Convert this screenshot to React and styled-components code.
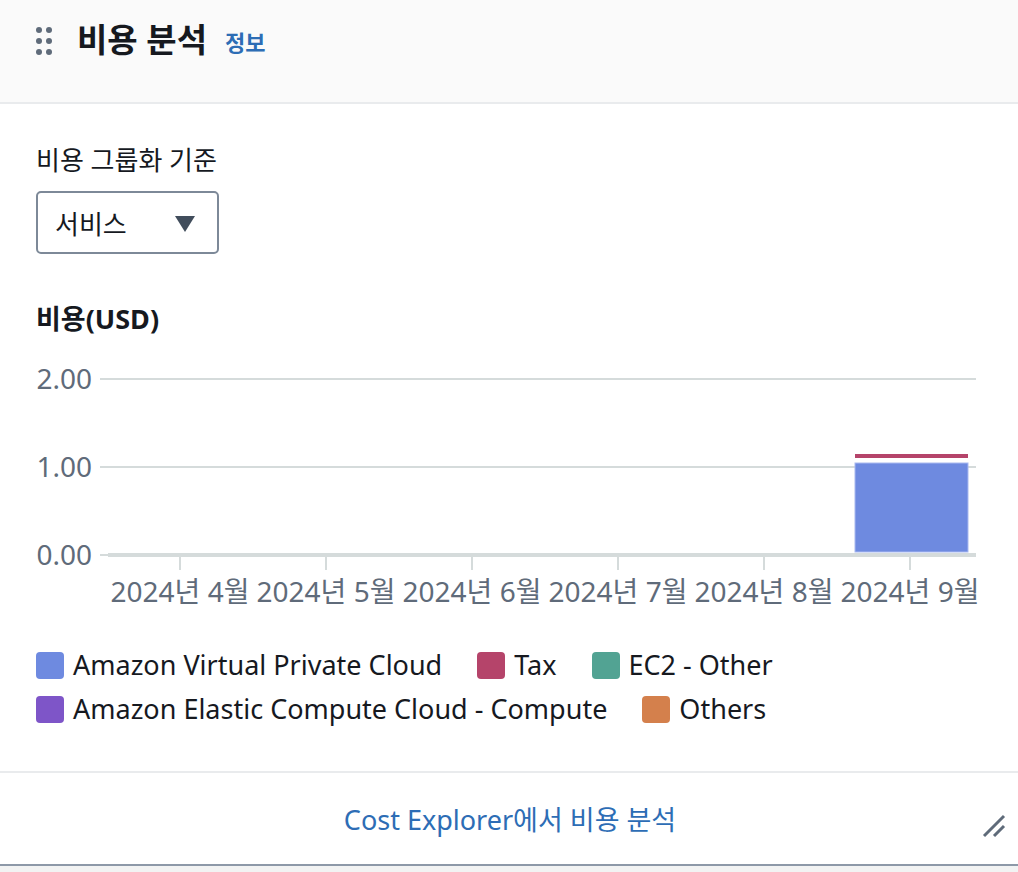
import React from 'react'
import styled, { createGlobalStyle } from 'styled-components'

const GlobalStyle = createGlobalStyle`
   body {
      margin: 0;
      background: #f2f3f3;
      font-family: "Noto Sans", "Noto Sans CJK KR", sans-serif;
      color: #16191f;
   }
`

const Card = styled.div`
   width: 1018px;
   height: 864px;
   background: #ffffff;
   border-bottom: 2px solid #8d99a8;
   position: relative;
   display: flex;
   flex-direction: column;
`

const Header = styled.div`
   height: 104px;
   background: #fafafa;
   border-bottom: 2px solid #e9ebed;
   display: flex;
   align-items: flex-start;
   padding: 20px 0 0 36px;
   box-sizing: border-box;
`

const DragHandle = styled.div`
   display: grid;
   grid-template-columns: repeat(2, 6px);
   grid-auto-rows: 6px;
   gap: 5px 4px;
   margin: 7px 25px 0 0;
   span {
      width: 6px;
      height: 6px;
      border-radius: 50%;
      background: #5f6b7a;
   }
`

const Title = styled.h2`
   margin: 0;
   font-size: 33px;
   line-height: 40px;
   font-weight: 700;
   color: #16191f;
`

const InfoLink = styled.a`
   font-size: 22px;
   font-weight: 700;
   line-height: 40px;
   color: #2d6db5;
   margin: 2px 0 0 18px;
`

const Body = styled.div`
   flex: 1;
   padding: 40px 36px 0 36px;
   display: flex;
   flex-direction: column;
`

const Label = styled.div`
   font-size: ${({ bold }) => bold ? 27 : 26}px;
   line-height: 32px;
   font-weight: ${({ bold }) => bold ? 700 : 400};
`

const Select = styled.div`
   margin-top: 15px;
   width: 183px;
   height: 63px;
   flex-shrink: 0;
   box-sizing: border-box;
   border: 2px solid #7d8998;
   border-radius: 5px;
   display: flex;
   align-items: center;
   justify-content: space-between;
   padding: 0 22px 0 17px;
   font-size: 26px;
`

const Caret = styled.span`
   width: 0;
   height: 0;
   border-left: 10px solid transparent;
   border-right: 10px solid transparent;
   border-top: 16px solid #414d5c;
   margin-top: 2px;
`

const ChartTitle = styled(Label)`
   margin-top: 49px;
`

const ChartSvg = styled.svg`
   display: block;
   flex-shrink: 0;
   margin-top: 6px;
   font-family: "Noto Sans", "Noto Sans CJK KR", sans-serif;
`

const Legend = styled.div`
   margin-top: 40px;
   display: flex;
   flex-wrap: wrap;
   row-gap: 16px;
   column-gap: 35px;
   width: 800px;
`

const LegendItem = styled.div`
   display: flex;
   align-items: center;
   gap: 9px;
   font-size: 27px;
   line-height: 28px;
   color: #16191f;
`

const Swatch = styled.span`
   width: 28px;
   height: 27px;
   border-radius: 4px;
   background: ${({ color }) => color};
`

const Footer = styled.div`
   height: 93px;
   flex-shrink: 0;
   border-top: 2px solid #e9ebed;
   display: flex;
   align-items: center;
   justify-content: center;
   box-sizing: border-box;
`

const FooterLink = styled.a`
   font-size: 27px;
   color: #2d6db5;
   margin-left: 2px;
`

const ResizeHandle = styled.svg`
   position: absolute;
   right: 12px;
   bottom: 26px;
`

const ticks = ['2024년 4월', '2024년 5월', '2024년 6월', '2024년 7월', '2024년 8월', '2024년 9월']

const legend = [
   ['Amazon Virtual Private Cloud', '#6e8ae0'],
   ['Tax', '#b5446a'],
   ['EC2 - Other', '#52a393'],
   ['Amazon Elastic Compute Cloud - Compute', '#7e55c8'],
   ['Others', '#d4804c'],
]

const yTicks = [['2.00', 38], ['1.00', 126], ['0.00', 214]]

const Chart = () => (
   <ChartSvg width="946" height="270">
      {yTicks.map(([t, y]) => (
         <g key={t}>
            <line x1="64" x2="940" y1={y} y2={y} stroke="#d5dbdb" strokeWidth="2" />
            <text x="56" y={y + 10} textAnchor="end" fontSize="28" fill="#5f6b7a">{t}</text>
         </g>
      ))}
      <line x1="72" x2="940" y1="214" y2="214" stroke="#d5dbdb" strokeWidth="4" />
      {ticks.map((t, i) => (
         <g key={t}>
            <line x1={144 + i * 146} x2={144 + i * 146} y1="216" y2="229" stroke="#d5dbdb" strokeWidth="2" />
            <text x={144 + i * 146} y="261" textAnchor="middle" fontSize="28" fill="#5f6b7a">{t}</text>
         </g>
      ))}
      <rect x="819" y="122" width="113" height="89" fill="#6e8ae0" stroke="#a9b9f0" strokeWidth="1" />
      <rect x="819" y="113" width="113" height="4" fill="#b5446a" />
   </ChartSvg>
)

const App = () => (
   <>
      <GlobalStyle />
      <Card>
         <Header>
            <DragHandle>
               {[0, 1, 2, 3, 4, 5].map(i => <span key={i} />)}
            </DragHandle>
            <Title>비용 분석</Title>
            <InfoLink>정보</InfoLink>
         </Header>
         <Body>
            <Label>비용 그룹화 기준</Label>
            <Select>
               <span>서비스</span>
               <Caret />
            </Select>
            <ChartTitle bold>비용(USD)</ChartTitle>
            <Chart />
            <Legend>
               {legend.map(([name, color]) => (
                  <LegendItem key={name}>
                     <Swatch color={color} />
                     {name}
                  </LegendItem>
               ))}
            </Legend>
         </Body>
         <Footer>
            <FooterLink>Cost Explorer에서 비용 분석</FooterLink>
         </Footer>
         <ResizeHandle width="24" height="24" viewBox="0 0 24 24">
            <line x1="2" y1="22" x2="22" y2="2" stroke="#5f6b7a" strokeWidth="3" />
            <line x1="12" y1="22" x2="22" y2="12" stroke="#5f6b7a" strokeWidth="3" />
         </ResizeHandle>
      </Card>
   </>
)

export default App
